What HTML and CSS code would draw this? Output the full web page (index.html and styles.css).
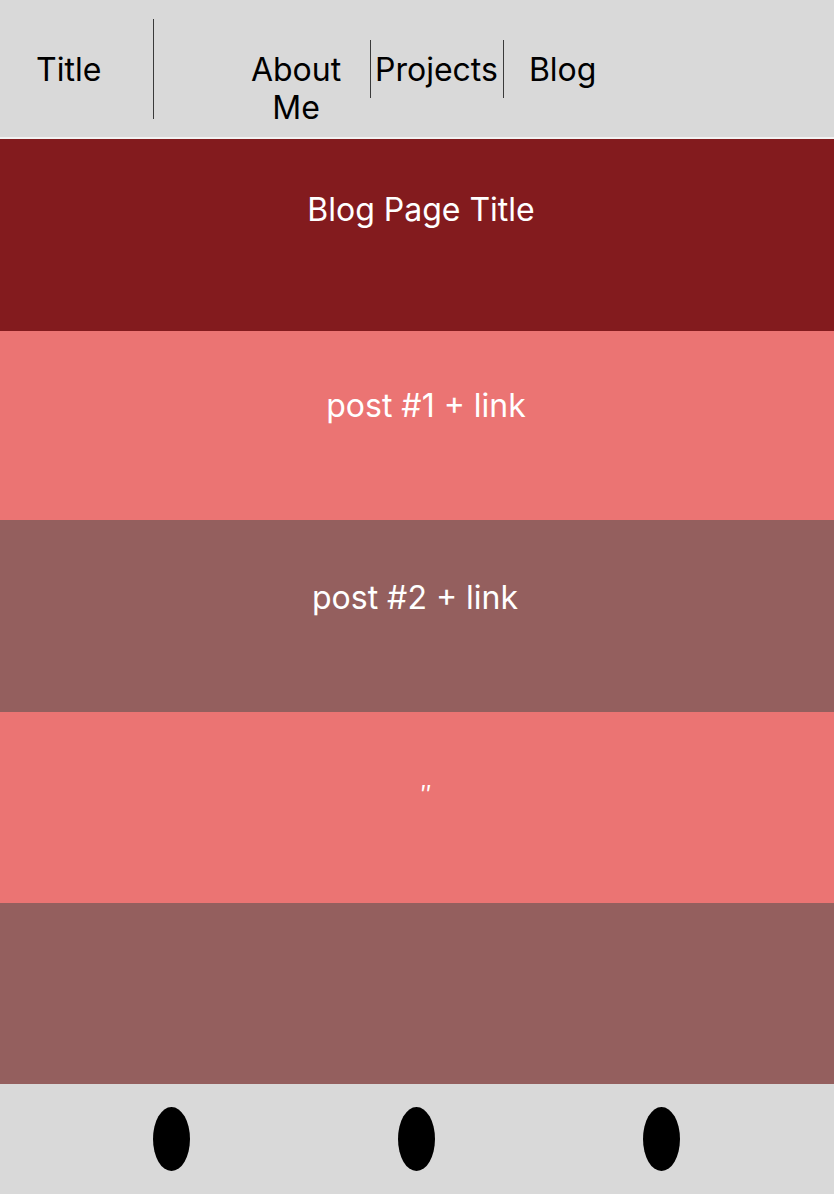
FILE: index.html
```html
<!DOCTYPE html>
<html lang="en">
<head>
<meta charset="UTF-8">
<title>Blog</title>
<link rel="stylesheet" href="styles.css">
</head>
<body>
    <header class="site-header">
        <div class="site-title">Title</div>
        <div class="divider divider-tall"></div>
        <nav class="nav">
            <a class="nav-item nav-about" href="about.html">About Me</a>
            <div class="divider divider-short"></div>
            <a class="nav-item nav-projects" href="projects.html">Projects</a>
            <div class="divider divider-short"></div>
            <a class="nav-item nav-blog" href="blog.html">Blog</a>
        </nav>
    </header>
    <main>
        <section class="band band-title">
            <h1 class="band-text shift-title">Blog Page Title</h1>
        </section>
        <section class="band band-pink">
            <a class="band-text shift-right" href="#">post #1 + link</a>
        </section>
        <section class="band band-mauve">
            <a class="band-text shift-left" href="#">post #2 + link</a>
        </section>
        <section class="band band-pink band-ditto">
            <p class="band-text shift-ditto">″</p>
        </section>
        <section class="band band-mauve band-last"></section>
    </main>
    <footer class="site-footer">
        <span class="dot"></span>
        <span class="dot"></span>
        <span class="dot"></span>
    </footer>
</body>
</html>
```

FILE: styles.css
```css
body {
    margin: 0;
    font-family: 'Inter', 'Noto Sans', sans-serif;
    font-size: 32px;
    line-height: 38px;
    background-color: #d9d9d9;
}
.site-header {
    display: flex;
    align-items: flex-start;
    height: 137px;
    background-color: #d9d9d9;
    border-bottom: 2px solid #f2f2f2;
}
.site-title {
    width: 153px;
    padding: 51px 0 0 36px;
    box-sizing: border-box;
    color: #000;
}
.divider {
    width: 1px;
    background-color: #3a3a3a;
    flex-shrink: 0;
}
.divider-tall {
    margin-top: 19px;
    height: 100px;
}
.divider-short {
    margin-top: 40px;
    height: 58px;
}
.nav {
    display: flex;
    align-items: flex-start;
    padding-left: 94px;
}
.nav-item {
    color: #000;
    text-decoration: none;
    padding-top: 51px;
}
.nav-about {
    width: 96px;
    text-align: center;
    margin-right: 26px;
}
.nav-projects {
    padding-left: 4px;
    padding-right: 5px;
}
.nav-blog {
    padding-left: 25px;
}
.band {
    display: flex;
    justify-content: center;
    align-items: flex-start;
    color: #fff;
}
.band-text {
    margin: 0;
    font-size: 32px;
    font-weight: 400;
    line-height: 38px;
    color: #fff;
    text-decoration: none;
}
.band-title {
    height: 192px;
    background-color: #831b1e;
    padding-top: 52px;
    box-sizing: border-box;
}
.band-pink {
    height: 189px;
    background-color: #eb7473;
    padding-top: 56px;
    box-sizing: border-box;
}
.band-mauve {
    height: 192px;
    background-color: #945f5e;
    padding-top: 59px;
    box-sizing: border-box;
}
.band-ditto {
    height: 191px;
    padding-top: 64px;
}
.band-last {
    height: 181px;
}
.shift-title {
    padding-left: 8px;
}
.shift-right {
    padding-left: 18px;
}
.shift-left {
    padding-right: 4px;
}
.shift-ditto {
    padding-left: 18px;
    font-size: 24px;
}
.site-footer {
    display: flex;
    gap: 208px;
    height: 110px;
    padding: 23px 0 0 153px;
    box-sizing: border-box;
    background-color: #d9d9d9;
}
.dot {
    width: 37px;
    height: 64px;
    border-radius: 50%;
    background-color: #000;
}
```
